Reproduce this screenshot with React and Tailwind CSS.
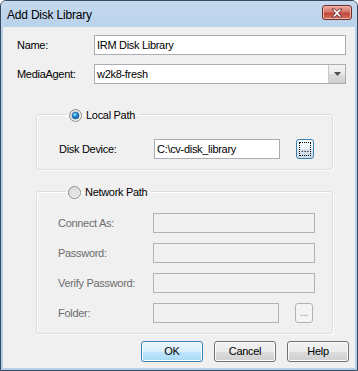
import React from 'react';

const font = "font-['Liberation_Sans',Arial,sans-serif] tracking-[-0.3px]";

function RadioMark({ checked }) {
  return (
    <svg width="13" height="13" viewBox="0 0 13 13" className="shrink-0">
      <defs>
        <linearGradient id={checked ? 'rOn' : 'rOff'} x1="0" y1="0" x2="1" y2="1">
          <stop offset="0" stopColor="#d6d6d6" />
          <stop offset="1" stopColor="#fbfbfb" />
        </linearGradient>
        <radialGradient id="dot" cx="0.4" cy="0.35" r="0.7">
          <stop offset="0" stopColor="#9be0ff" />
          <stop offset="0.45" stopColor="#2b8fd6" />
          <stop offset="1" stopColor="#0b4f8c" />
        </radialGradient>
      </defs>
      <circle cx="6.5" cy="6.5" r="6" fill={`url(#${checked ? 'rOn' : 'rOff'})`} stroke="#8f8f8f" />
      {checked ? (
        <circle cx="6.5" cy="6.5" r="3.5" fill="url(#dot)" stroke="#1b5d93" strokeWidth="0.6" />
      ) : (
        <circle cx="6.5" cy="6.5" r="3.5" fill="#e6e6e6" stroke="#d0d0d0" strokeWidth="0.6" />
      )}
    </svg>
  );
}

function TextBox({ value, width, disabled }) {
  return (
    <div
      className={
        'h-[20px] border flex items-center px-[2px] text-[11px] ' +
        width +
        (disabled ? ' bg-[#f0f0f0] border-[#afb3b6]' : ' bg-white border-[#abadb3] text-black')
      }
    >
      {value}
    </div>
  );
}

function BrowseButton({ focused }) {
  if (focused) {
    return (
      <div className="w-[18px] h-[20px] ml-[16px] rounded-[3px] border border-[#3c7fb1] bg-[linear-gradient(to_bottom,#f8fcfe_0%,#edf5fb_50%,#dbe7f0_51%,#cfdbe6_100%)] p-[2px]">
        <div className="w-full h-full border border-dotted border-black flex items-end justify-center text-[11px] leading-[11px] pb-[1px] text-black">
          ...
        </div>
      </div>
    );
  }
  return (
    <div className="w-[18px] h-[20px] ml-[16px] rounded-[3px] border border-[#adb2b5] bg-[#f4f4f4] flex items-end justify-center text-[11px] leading-[11px] pb-[4px] text-[#838383]">
      ...
    </div>
  );
}

function WinButton({ label, primary }) {
  return (
    <div
      className={
        'w-[62px] h-[21px] rounded-[3px] border flex items-center justify-center text-[11px] text-black shadow-[inset_0_0_0_1px_#fcfcfc] ' +
        (primary
          ? 'border-[#3c7fb1] bg-[linear-gradient(to_bottom,#eaf6fd_0%,#d9f0fc_50%,#bee6fd_51%,#a7d9f5_100%)]'
          : 'border-[#707070] bg-[linear-gradient(to_bottom,#f2f2f2_0%,#ebebeb_50%,#dddddd_51%,#cfcfcf_100%)]')
      }
    >
      {label}
    </div>
  );
}

function Row({ label, disabled, children, className = '' }) {
  return (
    <div className={'flex items-center ' + className}>
      <div className={'w-[95px] text-[11px] ' + (disabled ? 'text-[#6d6d6d]' : 'text-black')}>{label}</div>
      {children}
    </div>
  );
}

export default function App() {
  return (
    <div className={'w-[358px] h-[371px] bg-[#b6cfe9] border border-[#3a4a5e] rounded-t-[6px] flex flex-col overflow-hidden ' + font}>
      {/* title bar */}
      <div className="h-[26px] shrink-0 flex items-center justify-between pl-[6px] pr-[5px] bg-[linear-gradient(to_bottom,#c4d9ef_0%,#bad2eb_100%)]">
        <div className="text-[12px] tracking-[-0.2px] text-black pt-[2px]">Add Disk Library</div>
        <div className="w-[30px] h-[15px] -mt-[3px] rounded-[3px] border border-[#6f2d2a] bg-[linear-gradient(to_bottom,#e9a99f_0%,#d4786d_45%,#c0473a_55%,#d0735f_100%)] shadow-[inset_0_0_0_1px_#f0b4aa] flex items-center justify-center">
          <svg width="12" height="10" viewBox="0 0 12 10">
            <path
              d="M1 1 H4 L6 3.3 L8 1 H11 L7.6 5 L11 9 H8 L6 6.7 L4 9 H1 L4.4 5 Z"
              fill="#ffffff"
              stroke="#5a2522"
              strokeWidth="0.8"
              strokeLinejoin="round"
            />
          </svg>
        </div>
      </div>

      {/* client area */}
      <div className="flex-1 mx-[2px] mb-[2px] bg-[#f0f0f0] flex flex-col">
        <div className="flex items-center mt-[8px] ml-[14px]">
          <div className="w-[77px] text-[11px] text-black">Name:</div>
          <TextBox value="IRM Disk Library" width="w-[252px]" />
        </div>

        <div className="flex items-center mt-[9px] ml-[14px]">
          <div className="w-[77px] text-[11px] text-black">MediaAgent:</div>
          <div className="w-[252px] h-[20px] bg-white border border-[#abadb3] flex items-center justify-between pl-[2px] text-[11px] text-black">
            <span>w2k8-fresh</span>
            <div className="w-[17px] h-[18px] border-l border-[#c9c9c9] bg-[linear-gradient(to_bottom,#f2f2f2_0%,#ebebeb_50%,#dddddd_51%,#cfcfcf_100%)] flex items-center justify-center">
              <svg width="7" height="4" viewBox="0 0 7 4">
                <path d="M0 0 H7 L3.5 4 Z" fill="#4d4d4d" />
              </svg>
            </div>
          </div>
        </div>

        {/* Local Path group */}
        <fieldset className="ml-[33px] mt-[23px] w-[297px] border border-[#d5dfe5] rounded-[3px] shadow-[1px_1px_0_#ffffff,inset_1px_1px_0_#ffffff] pl-[22px] pt-[18px] pb-[10px]">
          <legend className="ml-[8px] px-[2px] pr-[4px] flex items-center gap-[4px] h-[14px] pt-[2px] text-[11px] text-black">
            <RadioMark checked />
            <span>Local Path</span>
          </legend>
          <Row label="Disk Device:">
            <TextBox value="C:\cv-disk_library" width="w-[126px]" />
            <BrowseButton focused />
          </Row>
        </fieldset>

        {/* Network Path group */}
        <fieldset className="ml-[33px] mt-[14px] w-[297px] border border-[#d5dfe5] rounded-[3px] shadow-[1px_1px_0_#ffffff,inset_1px_1px_0_#ffffff] pl-[21px] pt-[15px] pb-[10px]">
          <legend className="ml-[8px] px-[2px] pr-[4px] flex items-center gap-[4px] h-[14px] pt-[2px] text-[11px] text-black">
            <RadioMark />
            <span>Network Path</span>
          </legend>
          <div className="flex flex-col gap-[10px]">
            <Row label="Connect As:" disabled>
              <TextBox width="w-[162px]" disabled />
            </Row>
            <Row label="Password:" disabled>
              <TextBox width="w-[162px]" disabled />
            </Row>
            <Row label="Verify Password:" disabled>
              <TextBox width="w-[162px]" disabled />
            </Row>
            <Row label="Folder:" disabled>
              <TextBox width="w-[126px]" disabled />
              <BrowseButton />
            </Row>
          </div>
        </fieldset>

        <div className="flex justify-end gap-[11px] mt-[7px] pr-[6px]">
          <WinButton label="OK" primary />
          <WinButton label="Cancel" />
          <WinButton label="Help" />
        </div>
      </div>
    </div>
  );
}
